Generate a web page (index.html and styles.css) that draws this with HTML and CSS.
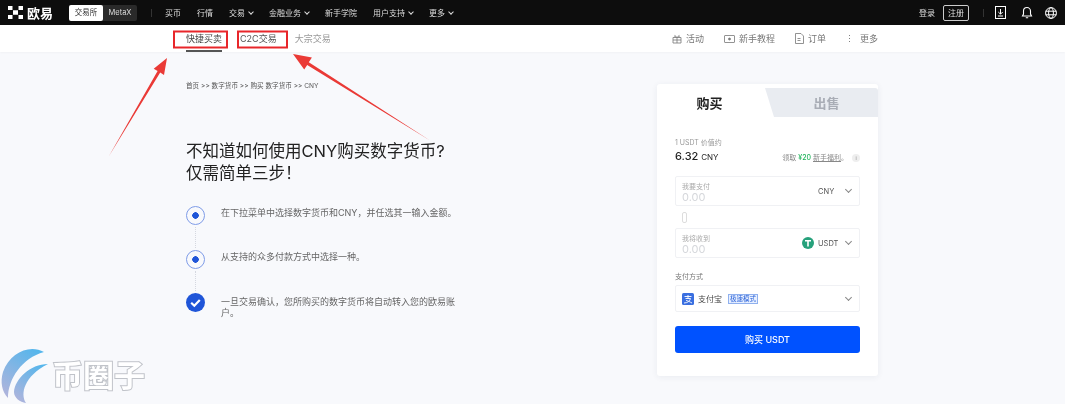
FILE: index.html
```html
<!DOCTYPE html>
<html lang="zh-CN">
  <head>
    <meta charset="UTF-8" />
    <meta name="viewport" content="width=device-width, initial-scale=1.0" />
    <title>购买 USDT</title>
    <link rel="stylesheet" href="styles.css">
  </head>
  <body>
    <header class="topbar">
      <div class="logo">
        <svg width="15" height="13" viewBox="0 0 15 13"><path fill="#fff" d="M0 0h4.500v4H0zM10.500 0H15v4h-4.500zM5 4.300h5v4.400H5zM0 9h4.500v4H0zM10.500 9H15v4h-4.500z"/></svg>
        <span>欧易</span>
      </div>
      <div class="switch"><span class="switch-on">交易所</span><span>MetaX</span></div>
      <i class="divider"></i>
      <nav class="mainnav">
        <a>买币</a>
        <a>行情</a>
        <a>交易<b class="caret"></b></a>
        <a>金融业务<b class="caret"></b></a>
        <a>新手学院</a>
        <a>用户支持<b class="caret"></b></a>
        <a>更多<b class="caret"></b></a>
      </nav>
      <div class="topright">
        <a>登录</a>
        <a class="register">注册</a>
        <i class="divider"></i>
        <svg class="download" width="11" height="13" viewBox="0 0 11 13" fill="none" stroke="#fff"><rect x=".5" y=".5" width="10" height="12"/><path d="M5.500 3v5M3.300 6 5.500 8.200 7.700 6M3 10h5"/></svg>
        <svg class="bell" width="12" height="13" viewBox="0 0 12 13" fill="none" stroke="#fff" stroke-width="1.100"><path d="M1.500 10h9L9.500 8V5a3.500 3.500 0 0 0-7 0v3zM4.800 11.800h2.400"/></svg>
        <svg class="globe" width="12" height="12" viewBox="0 0 12 12" fill="none" stroke="#fff"><circle cx="6" cy="6" r="5.400"/><ellipse cx="6" cy="6" rx="2.400" ry="5.400"/><path d="M.6 4.200h10.800M.6 7.800h10.800"/></svg>
      </div>
    </header>

    <div class="subnav">
      <div class="tabs">
        <a class="tab tab-active">快捷买卖</a>
        <a class="tab tab-c2c">C2C交易</a>
        <a class="tab tab-muted">大宗交易</a>
      </div>
      <div class="sublinks">
        <a><svg width="10" height="10" viewBox="0 0 10 10" fill="none" stroke="#777" stroke-width=".8"><path d="M1 3.500h8v5.500H1zM1 6h8M5 3.500V9M3 3.500 2.800 1.500 5 3.500 7.200 1.500 7 3.500"/></svg>活动</a>
        <a><svg width="11" height="10" viewBox="0 0 11 10" fill="none" stroke="#777" stroke-width=".8"><rect x=".5" y="1.500" width="10" height="7" rx=".5"/><circle cx="5.500" cy="5" r="1" fill="#777"/></svg>新手教程</a>
        <a><svg width="9" height="11" viewBox="0 0 9 11" fill="none" stroke="#777" stroke-width=".8"><path d="M.5.500h5.500l2.500 2.500v7.500h-8zM2.500 5.500h3M2.500 7.500h3"/></svg>订单</a>
        <a class="sublink-more"><em class="dots">⋮</em>更多</a>
      </div>
    </div>

    <main class="content">
      <section class="intro">
        <p class="crumbs">首页 &gt;&gt; 数字货币 &gt;&gt; 购买 数字货币 &gt;&gt; CNY</p>
        <h1>不知道如何使用CNY购买数字货币?<br />仅需简单三步&#65281;</h1>
        <ol class="steps">
          <li class="step">
            <div class="mark"><span class="dot"></span><i class="line"></i></div>
            <p>在下拉菜单中选择数字货币和CNY&#65292;并任选其一输入金额。</p>
          </li>
          <li class="step">
            <div class="mark"><span class="dot"></span><i class="line"></i></div>
            <p>从支持的众多付款方式中选择一种。</p>
          </li>
          <li class="step">
            <div class="mark">
              <svg width="19" height="19" viewBox="0 0 19 19"><circle cx="9.500" cy="9.500" r="9.500" fill="#1f55d8"/><path d="M5.200 9.800 8.300 12.800 13.800 7" fill="none" stroke="#fff" stroke-width="2.200"/></svg>
            </div>
            <p>一旦交易确认&#65292;您所购买的数字货币将自动转入您的欧易账户。</p>
          </li>
        </ol>
      </section>

      <section class="card">
        <div class="cardtabs">
          <div class="cardtab-on">购买</div>
          <div class="cardtab-off">出售</div>
        </div>
        <div class="cardbody">
          <p class="rate-label">1 USDT 价值约</p>
          <div class="rate">
            <span class="rate-num">6.32 <small>CNY</small></span>
            <span class="bonus">领取 <b>¥20</b> <u>新手福利</u>。<i class="info">i</i></span>
          </div>

          <div class="field">
            <div class="field-text">
              <label>我要支付</label>
              <div class="amount">0.00</div>
            </div>
            <div class="unit"><span class="code">CNY</span><b class="chev"></b></div>
          </div>
          <div class="swap"><i></i></div>
          <div class="field">
            <div class="field-text">
              <label>我将收到</label>
              <div class="amount">0.00</div>
            </div>
            <div class="unit">
              <svg width="12" height="12" viewBox="0 0 12 12"><circle cx="6" cy="6" r="6" fill="#26a17b"/><path d="M3 3h6v1.500H6.800V9.500H5.200V4.500H3z" fill="#fff"/></svg>
              <span class="code">USDT</span><b class="chev"></b>
            </div>
          </div>

          <p class="pay-label">支付方式</p>
          <div class="field field-pay">
            <div class="pay">
              <svg width="12" height="12" viewBox="0 0 12 12"><rect width="12" height="12" rx="1.500" fill="#3a6fe0"/><path d="M2.500 3.500h7M6 2v3.500M3.500 5.500h5C8 8 5.500 10 2 10M4 7.500c1.500 0 4 1.500 6 2.500" fill="none" stroke="#fff" stroke-width=".9"/></svg>
              <span>支付宝</span>
              <em class="tag">极速模式</em>
            </div>
            <div class="unit"><b class="chev"></b></div>
          </div>

          <button class="buy">购买 USDT</button>
        </div>
      </section>
    </main>

    <svg class="marks" width="1065" height="404" viewBox="0 0 1065 404">
      <g fill="none" stroke="#e8262a" stroke-width="2">
        <rect x="174" y="31.500" width="53" height="16"/>
        <rect x="238" y="31.500" width="49" height="16"/>
      </g>
      <g fill="#ea3a36">
        <path d="M109 156 160.200 72.600 164 74.900 167 58 153.700 68.700 157.600 71z"/>
        <path d="M430 140.500 308.800 62.300 311.900 57.600 293 54 304.200 69.500 307.200 64.900z"/>
      </g>
    </svg>

    <div class="watermark">
      <svg width="52" height="60" viewBox="0 0 52 60">
        <defs>
          <linearGradient id="wm" x1="0.800" y1="0" x2="0.200" y2="1">
            <stop offset="0" stop-color="#55b6ec"/>
            <stop offset="1" stop-color="#aeb4dc"/>
          </linearGradient>
        </defs>
        <path fill="url(#wm)" d="M44 8C30 0 10 8 3 28 0 38 2 48 8 54 8 35 22 14 44 8z"/>
        <path fill="url(#wm)" d="M48 20C30 20 15 35 14 48 14 54 20 58 26 59 20 50 24 32 48 20z"/>
      </svg>
      <span>币圈子</span>
    </div>
  </body>
</html>
```

FILE: styles.css
```css
html,
body {
  margin: 0;
  padding: 0;
  width: 1065px;
  height: 404px;
  overflow: hidden;
  font-family: Inter, "Noto Sans CJK SC", sans-serif;
  background-color: #f8f9fc;
  color: #333;
}
body {
  position: relative;
  filter: blur(0.4px);
}
p,
h1,
ol {
  margin: 0;
  padding: 0;
}
i,
em {
  font-style: normal;
}

/* top bar */
.topbar {
  height: 25px;
  background: #0d0d0d;
  color: #ddd;
  display: flex;
  align-items: center;
  font-size: 8px;
  padding: 0 8px;
  box-sizing: border-box;
}
.logo {
  display: flex;
  align-items: center;
  gap: 4px;
  width: 61px;
  color: #fff;
  font-size: 13px;
  font-weight: 700;
}
.switch {
  display: flex;
  width: 68px;
  height: 16px;
  line-height: 16px;
  background: #2a2a2a;
  border-radius: 2px;
  text-align: center;
  font-size: 7.500px;
}
.switch span {
  flex: 1;
}
.switch .switch-on {
  background: #fff;
  color: #333;
  border-radius: 2px;
}
.divider {
  width: 1px;
  height: 8px;
  background: #333;
  margin: 0 13.500px;
}
.mainnav {
  display: flex;
  gap: 16px;
}
.mainnav a {
  display: flex;
  align-items: center;
  font-size: 8px;
}
.caret {
  width: 3px;
  height: 3px;
  margin: -2px 0 0 4px;
  border-right: 1px solid #ddd;
  border-bottom: 1px solid #ddd;
  transform: rotate(45deg);
}
.topright {
  margin-left: auto;
  display: flex;
  align-items: center;
}
.register {
  border: 1px solid #ccc;
  border-radius: 2px;
  width: 24px;
  height: 14px;
  line-height: 14px;
  text-align: center;
  margin-left: 8px;
}
.bell {
  margin: 0 12px 0 15px;
}
.topright .divider {
  margin: 0 11px 0 14px;
}

/* second row */
.subnav {
  height: 27px;
  background: #fff;
  display: flex;
  justify-content: space-between;
  padding: 0 187px 0 186px;
  box-shadow: 0 1px 2px rgba(0, 0, 0, 0.03);
  font-size: 9px;
}
.tabs {
  display: flex;
  gap: 18px;
}
.tab {
  height: 27px;
  line-height: 28px;
  color: #555;
  box-sizing: border-box;
}
.tab-active {
  color: #444;
  border-bottom: 2px solid #555;
}
.tab-muted {
  color: #999;
}
.sublinks {
  display: flex;
  gap: 20px;
  color: #777;
  line-height: 27px;
}
.sublinks a {
  display: flex;
  align-items: center;
  gap: 4px;
}
.sublink-more {
  margin-left: -1px;
}
.dots {
  margin-right: 2px;
}

/* page body */
.content {
  display: flex;
  align-items: flex-start;
  padding: 29px 0 0 186px;
}
.intro {
  width: 471px;
}
.crumbs {
  font-size: 6.600px;
  line-height: 10px;
  color: #555;
}
h1 {
  margin-top: 49px;
  font-size: 16.500px;
  line-height: 22px;
  font-weight: 400;
  color: #222;
}
.steps {
  list-style: none;
  margin-top: 22px;
  width: 283px;
}
.step {
  display: flex;
  gap: 16px;
  height: 43.500px;
  color: #666;
  font-size: 9px;
  line-height: 11px;
}
.step p {
  width: 240px;
  padding-top: 1px;
}
.step:last-child p {
  padding-top: 3px;
}
.mark {
  width: 19px;
  display: flex;
  flex-direction: column;
  align-items: center;
  flex: none;
}
.dot {
  width: 17px;
  height: 17px;
  flex: none;
  border: 1px solid #7f9ce8;
  border-radius: 50%;
  background: radial-gradient(circle, #1f55d8 0 3px, transparent 3.500px);
}
.line {
  flex: 1;
  border-left: 1px dotted #d5d8e0;
  margin: 2px 0;
}

/* buy card */
.card {
  width: 221px;
  height: 292px;
  margin-top: 3px;
  background: #fff;
  border-radius: 3px;
  box-shadow: 0 1px 6px rgba(40, 50, 80, 0.07);
}
.cardtabs {
  display: flex;
  height: 33px;
  font-size: 13px;
  font-weight: 700;
  text-align: center;
  align-items: flex-end;
}
.cardtab-on {
  width: 105px;
  line-height: 38px;
  height: 33px;
  color: #222;
  margin-right: 5px;
}
.cardtab-off {
  flex: 1;
  height: 29px;
  line-height: 30px;
  color: #a9adb6;
  background: #e9ecf1;
  border-radius: 0 3px 0 0;
  padding-left: 10px;
  clip-path: polygon(0 0, 100% 0, 100% 100%, 9px 100%);
  margin-left: -2px;
}
.cardbody {
  padding: 0 18px;
  font-size: 7px;
  color: #999;
}
.rate-label {
  margin-top: 21px;
  line-height: 10px;
}
.rate {
  display: flex;
  justify-content: space-between;
  align-items: baseline;
  margin-top: 1px;
  height: 16px;
}
.rate-num {
  font-size: 11px;
  font-weight: 500;
  color: #222;
}
.rate-num small {
  font-size: 8px;
  font-weight: 400;
}
.bonus {
  color: #888;
}
.bonus b {
  color: #23b45d;
  font-weight: 500;
}
.info {
  display: inline-block;
  width: 8px;
  height: 8px;
  line-height: 8px;
  border-radius: 50%;
  background: #eee;
  margin-left: 4px;
  font-size: 5px;
  text-align: center;
}
.field {
  height: 30px;
  border: 1px solid #f0f1f4;
  border-radius: 2px;
  box-sizing: border-box;
  margin-top: 11px;
  padding: 0 6px;
  display: flex;
  justify-content: space-between;
  align-items: center;
}
.field-text {
  padding-top: 3px;
}
.field label {
  display: block;
  line-height: 9px;
  color: #aaa;
}
.amount {
  font-size: 11px;
  line-height: 13px;
  color: #d5d7db;
}
.unit {
  display: flex;
  align-items: center;
  gap: 4px;
  font-size: 7.500px;
  color: #555;
}
.code {
  width: 24px;
}
.chev {
  width: 4px;
  height: 4px;
  margin: -3px 2px 0 0;
  border-right: 1px solid #888;
  border-bottom: 1px solid #888;
  transform: rotate(45deg);
}
.swap {
  height: 22px;
  margin-bottom: -11px;
  padding-left: 7px;
  display: flex;
  align-items: center;
}
.swap i {
  width: 3px;
  height: 9px;
  border: 1px solid #ddd;
  border-radius: 2px;
}
.pay-label {
  margin-top: 14px;
  line-height: 10px;
  color: #777;
}
.field-pay {
  height: 27px;
  margin-top: 3px;
}
.pay {
  display: flex;
  align-items: center;
  gap: 4px;
  font-size: 8px;
  color: #444;
}
.tag {
  margin-left: 2px;
  padding: 0 1px;
  font-size: 6.500px;
  line-height: 8px;
  color: #2a62d9;
  background: #e8f0ff;
  border: 1px solid #8fb0ee;
}
.buy {
  display: block;
  width: 100%;
  height: 27px;
  margin-top: 14px;
  border: none;
  border-radius: 3px;
  background: #0052ff;
  color: #fff;
  font-family: inherit;
  font-size: 9px;
  font-weight: 500;
}

/* annotations drawn over the screenshot */
.marks {
  position: absolute;
  top: 0;
  left: 0;
  pointer-events: none;
}
.watermark {
  position: absolute;
  left: 0;
  top: 344px;
  display: flex;
  align-items: flex-start;
}
.watermark span {
  margin-top: 14px;
  font-size: 31px;
  line-height: 36px;
  font-weight: 700;
  color: #fff;
  -webkit-text-stroke: 2px #c0c3c9;
  paint-order: stroke fill;
}
```
